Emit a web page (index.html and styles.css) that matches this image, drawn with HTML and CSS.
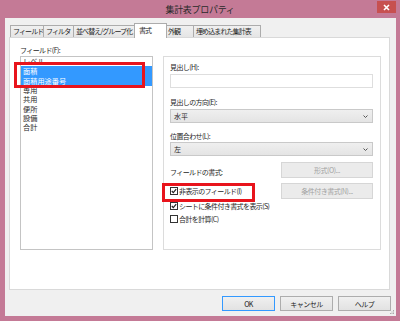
FILE: index.html
```html
<!DOCTYPE html>
<html lang="ja">

<head>
    <meta charset="UTF-8">
    <meta name="viewport" content="width=device-width, initial-scale=1.0">
    <link rel="stylesheet" href="styles.css">
    <title>集計表プロパティ</title>
</head>

<body>

    <div class="window">

        <header class="title-bar">
            <span></span>
            <span class="title">集計表プロパティ</span>
            <span class="close">
                <svg width="7" height="7" viewBox="0 0 7 7">
                    <path d="M1 1 L6 6 M6 1 L1 6" stroke="#fff" stroke-width="1.6"/>
                </svg>
            </span>
        </header>

        <section class="client">

            <nav class="tabs">
                <span class="tab w-field">フィールド</span>
                <span class="tab w-filter">フィルタ</span>
                <span class="tab w-sort">並べ替え/グループ化</span>
                <span class="tab tab-active w-format">書式</span>
                <span class="tab w-look">外観</span>
                <span class="tab w-embed">埋め込まれた集計表</span>
            </nav>

            <section class="panel">
                <div class="label">フィールド(F):</div>

                <div class="columns">
                    <div class="list-wrap">
                        <ul class="list">
                            <li>レベル</li>
                            <li class="selected">面積</li>
                            <li class="selected">面積用途番号</li>
                            <li>専用</li>
                            <li>共用</li>
                            <li>便所</li>
                            <li>設備</li>
                            <li>合計</li>
                        </ul>
                        <div class="mark mark-list"></div>
                    </div>

                    <div class="group">
                        <div class="label">見出し(H):</div>
                        <div class="input"></div>

                        <div class="label gap-9">見出しの方向(E):</div>
                        <div class="select">
                            <span>水平</span>
                            <svg width="5" height="3" viewBox="0 0 5 3"><path d="M0.5 0.5 L2.5 2.5 L4.5 0.5" fill="none" stroke="#555" stroke-width="1"/></svg>
                        </div>

                        <div class="label gap-8">位置合わせ(L):</div>
                        <div class="select select-tight">
                            <span>左</span>
                            <svg width="5" height="3" viewBox="0 0 5 3"><path d="M0.5 0.5 L2.5 2.5 L4.5 0.5" fill="none" stroke="#555" stroke-width="1"/></svg>
                        </div>

                        <div class="row row-format">
                            <span class="row-text">フィールドの書式:</span>
                            <span class="btn btn-disabled">形式(O)...</span>
                        </div>

                        <div class="row row-cond">
                            <span class="check">
                                <svg width="8" height="8" viewBox="0 0 8 8"><rect x="0.5" y="0.5" width="7" height="7" fill="#fff" stroke="#333"/><path d="M1.8 4 L3.3 5.6 L6.2 2.2" fill="none" stroke="#222" stroke-width="1.2"/></svg>
                                非表示のフィールド(I)
                            </span>
                            <span class="btn btn-disabled">条件付き書式(N)...</span>
                        </div>

                        <div class="check check-row">
                            <svg width="8" height="8" viewBox="0 0 8 8"><rect x="0.5" y="0.5" width="7" height="7" fill="#fff" stroke="#333"/><path d="M1.8 4 L3.3 5.6 L6.2 2.2" fill="none" stroke="#222" stroke-width="1.2"/></svg>
                            シートに条件付き書式を表示(S)
                        </div>

                        <div class="check check-row gap-4">
                            <svg width="8" height="8" viewBox="0 0 8 8"><rect x="0.5" y="0.5" width="7" height="7" fill="#fff" stroke="#333"/></svg>
                            合計を計算(C)
                        </div>

                        <div class="mark mark-check"></div>
                    </div>
                </div>
            </section>

            <footer class="buttons">
                <span class="btn btn-main btn-ok">OK</span>
                <span class="btn btn-main">キャンセル</span>
                <span class="btn btn-main">ヘルプ</span>
            </footer>

            <svg class="grip" width="5" height="5" viewBox="0 0 5 5">
                <rect x="3" y="0" width="1" height="1" fill="#aaa"/>
                <rect x="1.5" y="1.5" width="1" height="1" fill="#aaa"/>
                <rect x="3" y="1.5" width="1" height="1" fill="#aaa"/>
                <rect x="0" y="3" width="1" height="1" fill="#aaa"/>
                <rect x="1.5" y="3" width="1" height="1" fill="#aaa"/>
                <rect x="3" y="3" width="1" height="1" fill="#aaa"/>
            </svg>

        </section>
    </div>

</body>

</html>
```

FILE: styles.css
```css
* {
    box-sizing: border-box;
    font-family: "Noto Sans CJK JP", "Noto Sans", sans-serif;
    color: #262626;
}

body {
    margin: 0;
    width: 400px;
    height: 321px;
    overflow: hidden;
    background-color: #c47a96;
}

ul {
    margin: 0;
    padding: 0;
    list-style: none;
}

.window {
    display: flex;
    flex-direction: column;
    height: 321px;
}

.title-bar {
    display: grid;
    grid-template-columns: 1fr auto 1fr;
    height: 18px;
}

.title {
    font-size: 9px;
    line-height: 20px;
    letter-spacing: -0.3px;
    color: #2a2a2a;
}

.close {
    justify-self: end;
    display: flex;
    align-items: center;
    justify-content: center;
    width: 19px;
    height: 12px;
    margin: 1px 4px 0 0;
    background-color: #c75050;
}

.client {
    position: relative;
    height: 298px;
    margin: 0 4px 0 5px;
    padding: 5px 6px 0 4px;
    background-color: #f0f0f0;
}

.tabs {
    display: flex;
    align-items: flex-end;
    height: 14px;
    margin-left: 1px;
}

.tab {
    flex-shrink: 0;
    height: 12px;
    margin-right: -1px;
    padding-left: 2px;
    border: 1px solid #acacac;
    border-bottom: none;
    background: linear-gradient(#f0f0f0, #e5e5e5);
    font-size: 7px;
    letter-spacing: -0.9px;
    line-height: 11px;
    white-space: nowrap;
}

.tab-active {
    position: relative;
    z-index: 1;
    height: 15px;
    margin: 0 -2px -1px -3px;
    padding-left: 4px;
    background: #fff;
    line-height: 12px;
}

.w-field { width: 34px; }
.w-filter { width: 31px; }
.w-sort { width: 65px; }
.w-format { width: 33px; }
.w-look { width: 29px; }
.w-embed { width: 68px; }

.panel {
    height: 253px;
    padding: 7px 8px 0 10px;
    border: 1px solid #d9d9d9;
    background-color: #fff;
}

.label {
    height: 11px;
    font-size: 7px;
    letter-spacing: -0.6px;
    line-height: 11px;
    white-space: nowrap;
}

.gap-9 { margin-top: 9px; }
.gap-8 { margin-top: 8px; }
.gap-4 { margin-top: 4px; }

.columns {
    display: flex;
    gap: 10px;
}

.list-wrap {
    position: relative;
}

.list {
    width: 133px;
    height: 194px;
    border: 1px solid #c4c4c4;
    background-color: #fff;
}

.list li {
    height: 9.2px;
    padding-left: 2px;
    font-size: 7.2px;
    line-height: 9.2px;
    white-space: nowrap;
}

.list .selected {
    height: 10px;
    background-color: #3399ff;
    color: #fff;
    line-height: 10px;
}

.mark {
    position: absolute;
    border: 3px solid #e8141c;
}

.mark-list {
    left: -6px;
    top: 6px;
    width: 131px;
    height: 26px;
}

.group {
    position: relative;
    width: 219px;
    height: 194px;
    padding: 5px 7px 0 6px;
    border: 1px solid #dcdcdc;
}

.input {
    height: 14px;
    margin-top: 1px;
    border: 1px solid #dedede;
    background-color: #fff;
}

.select {
    display: flex;
    align-items: center;
    justify-content: space-between;
    height: 14px;
    margin-top: 1px;
    padding: 0 4px 0 3px;
    border: 1px solid #c9c9c9;
    background: linear-gradient(#efefef, #e4e4e4);
}

.select span {
    font-size: 7px;
    line-height: 12px;
}

.select-tight {
    margin-top: 0;
}

.row {
    display: flex;
    align-items: center;
    justify-content: space-between;
}

.row-format {
    margin-top: 6px;
}

.row-cond {
    margin-top: 5px;
}

.row-text {
    padding-top: 3px;
    font-size: 7px;
    letter-spacing: -0.6px;
}

.btn {
    display: flex;
    align-items: center;
    justify-content: center;
    height: 16px;
    font-size: 7px;
    letter-spacing: -0.5px;
    white-space: nowrap;
}

.btn-disabled {
    width: 92px;
    border: 1px solid #d6d6d6;
    background-color: #ebebeb;
    color: #a2a2a2;
}

.check {
    display: flex;
    align-items: center;
    gap: 1px;
    font-size: 7px;
    letter-spacing: -0.6px;
    white-space: nowrap;
}

.check-row {
    height: 12px;
    margin-top: 1px;
}

.mark-check {
    left: -2px;
    top: 126px;
    width: 93px;
    height: 19px;
}

.buttons {
    display: flex;
    justify-content: flex-end;
    gap: 5px;
    margin: 6px -1px 0 0;
}

.btn-main {
    width: 53px;
    height: 15px;
    border: 1px solid #adadad;
    background: linear-gradient(#f0f0f0, #e2e2e2);
    color: #222;
}

.btn-ok {
    border-color: #3399ff;
}

.grip {
    position: absolute;
    right: 1px;
    bottom: 1px;
}
```
